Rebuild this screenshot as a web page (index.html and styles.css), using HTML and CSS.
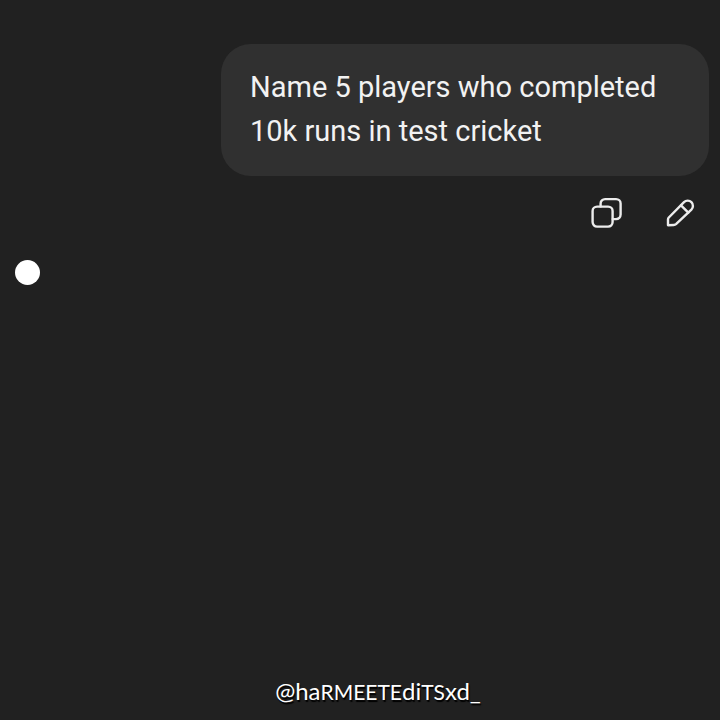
FILE: index.html
```html
<!DOCTYPE html>
<html lang="en">
<head>
<meta charset="utf-8">
<meta name="viewport" content="width=device-width, initial-scale=1.0">
<title>Chat</title>
<link rel="stylesheet" href="styles.css">
</head>
<body>
    <main class="chat">
        <div class="message">
            <p class="bubble">Name 5 players who completed 10k runs in test cricket</p>
            <div class="actions">
                <button type="button" aria-label="Copy">
                    <svg viewBox="0 0 32 32">
                        <rect x="2.6" y="9.6" width="20" height="20" rx="4.5"/>
                        <path d="M10.6 9.4V6.6a4.5 4.5 0 0 1 4.5-4.5h11a4.5 4.5 0 0 1 4.5 4.5v11a4.5 4.5 0 0 1-4.5 4.5h-3.3"/>
                    </svg>
                </button>
                <button type="button" aria-label="Edit">
                    <svg viewBox="0 0 32 32">
                        <path d="M4 28.2V22.6Q4 21.4 4.8 20.5L20 5.2a5.2 5.2 0 0 1 7.4 7.4L12 27.2Q11.1 28 9.8 28Z"/>
                        <path d="M17 8.3L24.3 15.6"/>
                    </svg>
                </button>
            </div>
        </div>
        <div class="typing" role="status" aria-label="Typing"></div>
    </main>
    <footer class="handle">@ha<span class="caps">RMEETE</span>di<span class="caps">TS</span>xd_</footer>
</body>
</html>
```
FILE: styles.css
```css
*{
    box-sizing: border-box;
}
body{
    display:flex;
    flex-direction: column;
    min-height:100vh;
    margin:0;
    background:#212121;
    color:#f2f2f2;
    font-family: Roboto, sans-serif;
}
.chat{
    flex:1;
    padding:44px 11px 0 15px;
}
.message{
    display:flex;
    flex-direction: column;
    align-items: flex-end;
}
.bubble{
    max-width:488px;
    margin:0;
    padding:21px 29px 23px;
    border-radius:30px;
    background:#303030;
    font-size:29px;
    line-height:44px;
}
.actions{
    display:flex;
    gap:42px;
    padding:21px 13px 0;
}
button{
    display:flex;
    padding:0;
    border:none;
    background:none;
    color:#ececec;
    cursor:pointer;
}
button svg{
    width:32px;
    height:32px;
    fill:none;
    stroke:currentColor;
    stroke-width:2.4;
    stroke-linecap:round;
    stroke-linejoin:round;
}
.typing{
    width:25px;
    height:25px;
    margin-top:31px;
    border-radius:50%;
    background:white;
}
.handle{
    padding:0 0 12px 36px;
    color:white;
    font-family: Lato, sans-serif;
    font-size:24px;
    line-height:32px;
    text-align:center;
    text-shadow:1px 2px 1px black;
}
.caps{
    font-size:21px;
}
```
